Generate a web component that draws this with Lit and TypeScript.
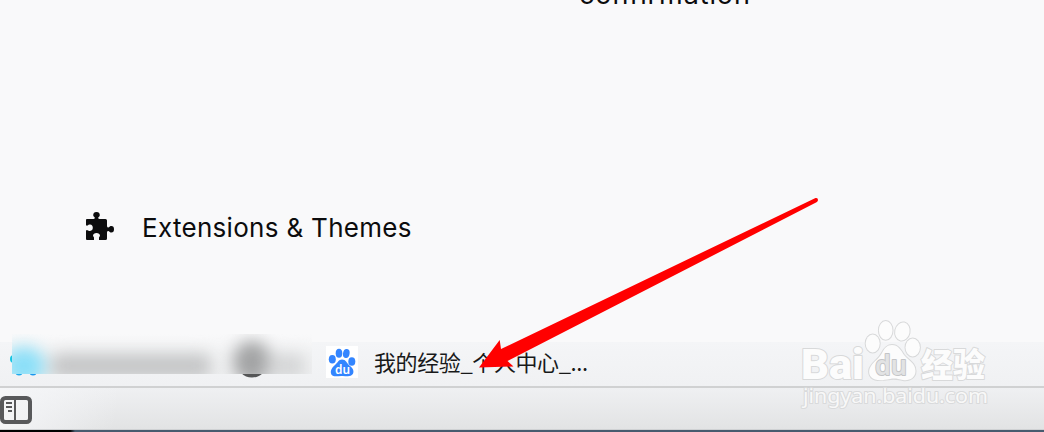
import { LitElement, html, css } from "lit";
import { customElement, property } from "lit/decorators.js";

@customElement("settings-link")
export class SettingsLink extends LitElement {
  @property() label = "";

  static styles = css`
    :host {
      display: flex;
      align-items: center;
      gap: 27px;
      height: 40px;
      color: #0c0c0d;
      font: 26px/40px Inter, sans-serif;
      letter-spacing: 0.3px;
      white-space: nowrap;
    }

    .icon {
      width: 30px;
      height: 30px;
      flex: none;
      overflow: visible;
    }
  `;

  render() {
    return html`
      <svg class="icon" viewBox="0 0 30 30" fill="currentColor">
        <path
          d="M1 6.800Q1 6 2 6H8.500Q9.800 6 9.800 4.500L8.300 3Q7.800 -1 11.500 -1Q15.200 -1 14.700 3L13.200 4.500Q13.200 6 14.500 6H20.500Q22 6 22 7.500V13Q22 14.500 23.500 14.500L25.500 13Q29 12.400 29 16.200Q29 20 25.500 19.400L23.500 18.100Q22 18 22 19.500V25.500Q22 27 20.500 27H14V24.600Q14.800 23.800 15 22.600Q14.700 20 11.500 20Q8.300 20 8 22.600Q8.200 23.800 9 24.600V27H2Q1 27 1 26V17.200H2.800Q3.500 18.200 5 17.900Q7.800 17.400 7.800 14.700Q7.800 12 5 11.600Q3.500 11.400 2.800 12.400H1Z"
        />
      </svg>
      <span>${this.label}</span>
    `;
  }
}

@customElement("bookmark-item")
export class BookmarkItem extends LitElement {
  @property() label = "";

  static styles = css`
    :host {
      display: flex;
      align-items: center;
      gap: 16px;
      color: #18191a;
      font: 22px/30px "Noto Sans CJK SC", sans-serif;
      letter-spacing: -0.4px;
      white-space: nowrap;
    }

    .icon {
      width: 32px;
      height: 32px;
      flex: none;
      background: #fff;
    }

    .label {
      padding-bottom: 2px;
    }

    .du {
      font: 600 13px "Noto Sans", sans-serif;
      letter-spacing: 0;
    }
  `;

  render() {
    return html`
      <svg class="icon" viewBox="0 0 32 32" fill="#3385ff">
        <ellipse cx="6.300" cy="13.200" rx="3.500" ry="4.300" />
        <ellipse cx="13" cy="7.200" rx="3.300" ry="4.500" />
        <ellipse cx="20.300" cy="7.500" rx="3.300" ry="4.500" transform="rotate(10 20.300 7.500)" />
        <ellipse cx="25.800" cy="15.500" rx="3.500" ry="4.300" />
        <path
          d="M16 13.500C20 13.500 20.500 17 23.500 19.500C26.800 22 28.500 25 26.800 28C24.500 31.500 20 29.700 16 29.900C12 29.700 8 31.500 5.500 28.700C3.500 25 6 21.500 9 19C12 16.500 12.500 13.500 16 13.500Z"
        />
        <text class="du" x="9" y="28" textLength="15" lengthAdjust="spacingAndGlyphs" fill="#fff">du</text>
      </svg>
      <span class="label">${this.label}</span>
    `;
  }
}

@customElement("site-watermark")
export class SiteWatermark extends LitElement {
  static styles = css`
    :host {
      display: block;
      width: 200px;
      height: 100px;
    }

    .mark {
      display: block;
      fill: #fcfcfc;
      stroke: #d8d9da;
      stroke-width: 2px;
      stroke-linejoin: round;
      paint-order: stroke;
    }

    .name {
      font: 900 43px Roboto, sans-serif;
    }

    .du {
      font: 600 27px "Noto Sans", sans-serif;
      fill: #e2e3e4;
      stroke: #c4c5c7;
    }

    .cjk {
      font: 900 33px "Noto Sans CJK SC", sans-serif;
    }

    .site {
      font: 20px "Noto Sans", sans-serif;
      fill: #f8f8f8;
      stroke: #d9dadb;
      stroke-width: 2px;
    }
  `;

  render() {
    return html`
      <svg class="mark" width="200" height="100" viewBox="0 0 200 100">
        <text class="name" x="1" y="68.500" textLength="63" lengthAdjust="spacingAndGlyphs">Bai</text>
        <ellipse cx="72.700" cy="33.500" rx="7" ry="9" />
        <ellipse cx="85.700" cy="20.400" rx="6.800" ry="9.400" />
        <ellipse cx="102.400" cy="21.500" rx="7.200" ry="9.100" transform="rotate(12 102.400 21.500)" />
        <ellipse cx="112.700" cy="37.500" rx="7.200" ry="8.900" />
        <path
          d="M92 35C98 35 101 40 104 45C108 50 115.500 53 115.500 61C115.500 68 109 71 103 70C98 69 95 68 90 69C84 70 80 71 75 69.500C69 67.500 67.500 61 71 56C74 51 79 49 82 43C84.500 38 87 35 92 35Z"
        />
        <text class="du" x="75" y="64.500" textLength="32" lengthAdjust="spacingAndGlyphs">du</text>
        <text class="cjk" x="121" y="67" textLength="64" lengthAdjust="spacingAndGlyphs">经验</text>
        <text class="site" x="3" y="93" textLength="185" lengthAdjust="spacingAndGlyphs">jingyan.baidu.com</text>
      </svg>
    `;
  }
}

@customElement("app-root")
export class AppRoot extends LitElement {
  static styles = css`
    :host {
      display: flex;
      flex-direction: column;
      position: relative;
      width: 1044px;
      height: 432px;
      overflow: hidden;
      background: #f9f9fa;
    }

    .page {
      display: flex;
      flex-direction: column;
      justify-content: space-between;
      box-sizing: border-box;
      height: 342px;
      padding: 0 85px 94px;
    }

    .notice {
      height: 20px;
      margin-left: 494px;
      color: #0c0c0d;
      font: 27px/32px Inter, sans-serif;
      letter-spacing: 0.9px;
    }

    .notice span {
      display: block;
      margin-top: -21px;
    }

    .bookmarks {
      display: flex;
      box-sizing: border-box;
      height: 46px;
      padding: 4px 0 0 326px;
      border-bottom: 2px solid #d0d1d2;
      background: linear-gradient(#f4f5f7, #f0f1f3);
    }

    .bookmarks bookmark-item {
      height: 32px;
    }

    .toolbar {
      display: flex;
      box-sizing: border-box;
      height: 42px;
      padding-top: 8px;
      border-bottom: 1px solid #cfd1d3;
      background:
        linear-gradient(100deg, #f5f6f8 0, #f5f6f800 120px),
        linear-gradient(#eff0f2, #e2e3e4);
    }

    .sidebar-icon {
      width: 32px;
      height: 28px;
    }

    .desktop {
      height: 2px;
      flex: none;
      background: linear-gradient(90deg, #000 70px, #475b6f 75px);
    }

    .hidden-items,
    .arrow {
      position: absolute;
      left: 0;
      top: 0;
    }

    .watermark {
      position: absolute;
      left: 800px;
      top: 310px;
    }
  `;

  render() {
    return html`
      <div class="page">
        <div class="notice"><span>confirmation</span></div>
        <settings-link label="Extensions & Themes"></settings-link>
      </div>

      <div class="bookmarks">
        <bookmark-item label="我的经验_个人中心_..."></bookmark-item>
      </div>

      <div class="toolbar">
        <svg class="sidebar-icon" viewBox="0 0 32 28" fill="none" stroke="#58595b">
          <rect x="2" y="2" width="28" height="24" rx="3.500" stroke-width="4" />
          <path d="M15 3V25M6 7H12M6 11H12M8 15H12" stroke-width="2" />
        </svg>
      </div>
      <div class="desktop"></div>

      <svg class="hidden-items" width="320" height="390">
        <defs>
          <filter
            id="soft"
            filterUnits="userSpaceOnUse"
            x="-40"
            y="290"
            width="400"
            height="140"
            color-interpolation-filters="sRGB"
          >
            <feGaussianBlur stdDeviation="8" />
          </filter>
          <linearGradient id="bar" x1="0" y1="0" x2="0" y2="1">
            <stop offset="0" stop-color="#f9f9fa" />
            <stop offset="0.500" stop-color="#f2f3f4" />
            <stop offset="1" stop-color="#eff0f1" />
          </linearGradient>
          <clipPath id="strip"><rect x="12" y="334" width="300" height="40" /></clipPath>
        </defs>
        <circle cx="14" cy="359" r="4" fill="#16c5e2" />
        <ellipse cx="19" cy="372.500" rx="3.500" ry="3" fill="#20a9ec" />
        <ellipse cx="33" cy="372.500" rx="3.500" ry="3" fill="#1b97ee" />
        <circle cx="252" cy="362" r="15.500" fill="#555657" />
        <rect x="12" y="334" width="300" height="40" fill="url(#bar)" />
        <g clip-path="url(#strip)">
          <g filter="url(#soft)">
            <ellipse cx="24" cy="366" rx="21" ry="19" fill="#8bdff8" />
            <rect x="51" y="354" width="160" height="24" rx="8" fill="#c4c5c6" />
            <ellipse cx="252" cy="362" rx="19" ry="21" fill="#a2a3a4" />
            <rect x="266" y="354" width="39" height="24" rx="8" fill="#d4d5d6" />
          </g>
        </g>
      </svg>

      <site-watermark class="watermark"></site-watermark>

      <svg class="arrow" width="1044" height="432" fill="#f00">
        <path d="M479 367.500L499.700 340L501 349L815.500 198Q818 197.500 818 200Q818 201.500 816.500 202.300L507.500 361L513.500 366.500Z" />
      </svg>
    `;
  }
}
